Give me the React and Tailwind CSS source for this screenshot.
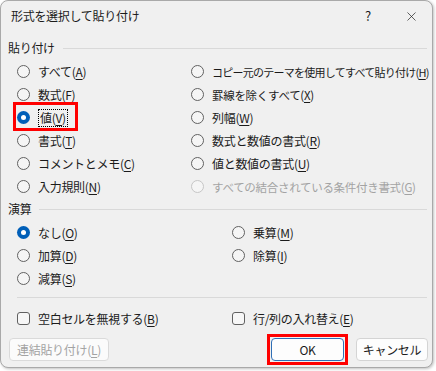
import { X } from "lucide-react";

const font = { fontFamily: '"Noto Sans CJK JP", "Noto Sans", sans-serif' };

function Key({ k }) {
  return (
    <>
      (<span className="underline underline-offset-2">{k}</span>)
    </>
  );
}

function Radio({ checked, disabled }) {
  if (checked) {
    return (
      <span className="flex h-[13px] w-[13px] shrink-0 items-center justify-center rounded-full bg-[#005fb8]">
        <span className="h-[5px] w-[5px] rounded-full bg-white" />
      </span>
    );
  }
  return (
    <span
      className={
        "h-[13px] w-[13px] shrink-0 rounded-full border bg-[#f5f5f5] " +
        (disabled ? "border-[#c6c6c6]" : "border-[#616161]")
      }
    />
  );
}

function Option({ label, k, checked, disabled, focus, size }) {
  return (
    <div
      className={
        "flex h-[23px] items-center gap-[8px] whitespace-nowrap " +
        (disabled ? "text-[#a3a3a3]" : "text-[#1b1b1b]")
      }
    >
      <Radio checked={checked} disabled={disabled} />
      <span
        className={
          (focus ? "border border-dotted border-black px-[1px] " : "") +
          "leading-[16px] " +
          (size || "")
        }
      >
        {label}
        <Key k={k} />
      </span>
    </div>
  );
}

function Check({ label, k }) {
  return (
    <div className="flex h-[23px] items-center gap-[8px] whitespace-nowrap text-[#1b1b1b]">
      <span className="h-[13px] w-[13px] shrink-0 rounded-[3px] border border-[#616161] bg-[#f7f7f7]" />
      <span>
        {label}
        <Key k={k} />
      </span>
    </div>
  );
}

function Section({ title }) {
  return (
    <div className="flex h-[22px] items-center gap-[8px] pr-[5px] text-[#1b1b1b]">
      <span>{title}</span>
      <div className="h-px flex-1 bg-[#d9d9d9]" />
    </div>
  );
}

export default function App() {
  return (
    <div className="h-[371px] w-[436px] bg-white text-[12px] tracking-[-0.3px]" style={font}>
      <div className="flex h-[368px] w-[433px] flex-col overflow-hidden rounded-lg border border-[#a9a9a9] bg-[#f0f0f0] shadow-[1px_1px_3px_rgba(0,0,0,0.25)]">
        <div className="flex h-[30px] items-center pl-[10px] text-[#1b1b1b]">
          <span className="flex-1">形式を選択して貼り付け</span>
          <span className="w-[44px] text-center text-[13px]">?</span>
          <span className="flex w-[42px] items-center justify-center">
            <X size={15} strokeWidth={1.1} color="#1b1b1b" />
          </span>
        </div>

        <div className="flex flex-col pl-[7px] pt-[6px]">
          <Section title="貼り付け" />
          <div className="grid grid-cols-[174px_1fr] pl-[9px] pt-[1px]">
            <div className="flex flex-col">
              <Option label="すべて" k="A" />
              <Option label="数式" k="F" />
              <div className="relative">
                <Option label="値" k="V" checked focus />
                <div className="pointer-events-none absolute left-[-4px] top-[-4px] h-[29px] w-[65px] border-[3px] border-[#ff0000]" />
              </div>
              <Option label="書式" k="T" />
              <Option label="コメントとメモ" k="C" />
              <Option label="入力規則" k="N" />
            </div>
            <div className="flex flex-col">
              <Option label="コピー元のテーマを使用してすべて貼り付け" k="H" size="text-[11px] tracking-[-0.75px]" />
              <Option label="罫線を除くすべて" k="X" size="text-[11.5px]" />
              <Option label="列幅" k="W" />
              <Option label="数式と数値の書式" k="R" />
              <Option label="値と数値の書式" k="U" />
              <Option label="すべての結合されている条件付き書式" k="G" disabled size="text-[11.5px]" />
            </div>
          </div>

          <Section title="演算" />
          <div className="grid grid-cols-[215px_1fr] pl-[9px] pt-[1px]">
            <div className="flex flex-col">
              <Option label="なし" k="O" checked />
              <Option label="加算" k="D" />
              <Option label="減算" k="S" />
            </div>
            <div className="flex flex-col">
              <Option label="乗算" k="M" />
              <Option label="除算" k="I" />
            </div>
          </div>

          <div className="ml-[9px] mr-[5px] mt-[7px] h-px bg-[#d9d9d9]" />

          <div className="grid grid-cols-[215px_1fr] pl-[9px] pt-[9px]">
            <Check label="空白セルを無視する" k="B" />
            <Check label="行/列の入れ替え" k="E" />
          </div>

          <div className="flex items-center pr-[4px] pt-[4px]">
            <button className="ml-[1px] h-[23px] w-[100px] rounded-[4px] border border-[#dadada] bg-[#fbfbfb] text-[#a3a3a3]">
              連結貼り付け<Key k="L" />
            </button>
            <div className="ml-auto border-[3px] border-[#ff0000] p-[1px]">
              <button className="block h-[23px] w-[73px] rounded-[4px] border border-[#2f6fb5] bg-[#fdfdfd] text-[#1b1b1b]">
                OK
              </button>
            </div>
            <button className="ml-[8px] h-[23px] w-[72px] rounded-[4px] border border-[#d4d4d4] bg-[#fdfdfd] text-[#1b1b1b]">
              キャンセル
            </button>
          </div>
        </div>
      </div>
    </div>
  );
}
